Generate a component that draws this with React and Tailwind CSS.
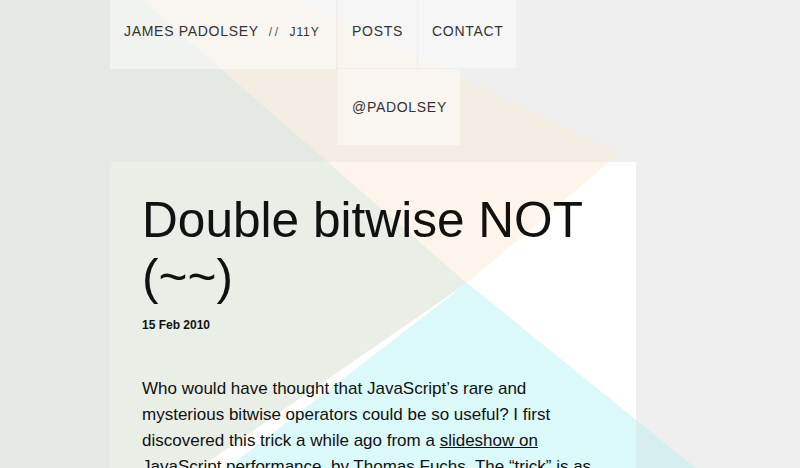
import React from "react";

const font = { fontFamily: '"Liberation Sans", Arial, sans-serif' };

function Pattern({ inside }) {
  const c = inside
    ? { gray: "#ffffff", green: "#e9eee7", peach: "#fdf5eb", cyan: "#dcf9fa" }
    : { gray: "#efefef", green: "#e5e9e3", peach: "#f4ede4", cyan: "#d7eeee" };
  return (
    <>
      <rect x="0" y="0" width="800" height="900" fill={c.gray} />
      <polygon points="0,0 142,0 467,283 160,495 0,495" fill={c.green} />
      <polygon points="142,0 298,0 620,153 467,283" fill={c.peach} />
      <polygon points="467,283 760,520 160,520" fill={c.cyan} />
    </>
  );
}

export default function App() {
  return (
    <div
      className="relative w-[800px] h-[468px] overflow-hidden bg-[#efefef]"
      style={font}
    >
      <svg
        className="absolute inset-0"
        width="800"
        height="468"
        viewBox="0 0 800 468"
      >
        <Pattern inside={false} />
      </svg>

      <div className="relative">
        <nav className="flex ml-[110px] gap-[2px] text-[14px] leading-[20px] tracking-[0.7px] text-[#333]">
          <div className="h-[69px] w-[226px] pl-[14px] pt-[21px] bg-white/45 whitespace-nowrap">
            <span>JAMES PADOLSEY</span>
            <span className="ml-[10px] text-[12px] tracking-[2.5px] text-[#555]">//</span>
            <span className="ml-[9px] text-[12px] tracking-[0.9px]">J11Y</span>
          </div>
          <div className="flex flex-col gap-[1px]">
            <div className="flex gap-[1px]">
              <div className="h-[68px] w-[79px] pl-[14px] pt-[21px] bg-white/45">POSTS</div>
              <div className="h-[68px] w-[98px] pl-[14px] pt-[21px] bg-white/45">CONTACT</div>
            </div>
            <div className="h-[76px] w-[122px] pl-[14px] pt-[28px] bg-white/45">@PADOLSEY</div>
          </div>
        </nav>

        <article className="relative ml-[110px] mt-[17px] w-[526px] h-[340px] overflow-hidden">
          <svg
            className="absolute left-0 top-0"
            width="526"
            height="340"
            viewBox="110 162 526 340"
          >
            <Pattern inside={true} />
          </svg>
          <div className="relative px-8 pt-[30px] text-[#111]">
            <h1 className="text-[49.6px] leading-[57px] font-normal text-[#111]">
              Double bitwise NOT (~~)
            </h1>
            <div className="mt-[10px] text-[12px] leading-[18px] font-bold">
              15 Feb 2010
            </div>
            <p className="mt-[42px] text-[17px] leading-[26px]">
              Who would have thought that JavaScript’s rare and mysterious
              bitwise operators could be so useful? I first discovered this
              trick a while ago from a{" "}
              <a className="underline" href="#">
                slideshow on JavaScript performance
              </a>
              , by <a className="underline" href="#">Thomas Fuchs</a>. The
              “trick” is as follows:
            </p>
          </div>
        </article>
      </div>
    </div>
  );
}
